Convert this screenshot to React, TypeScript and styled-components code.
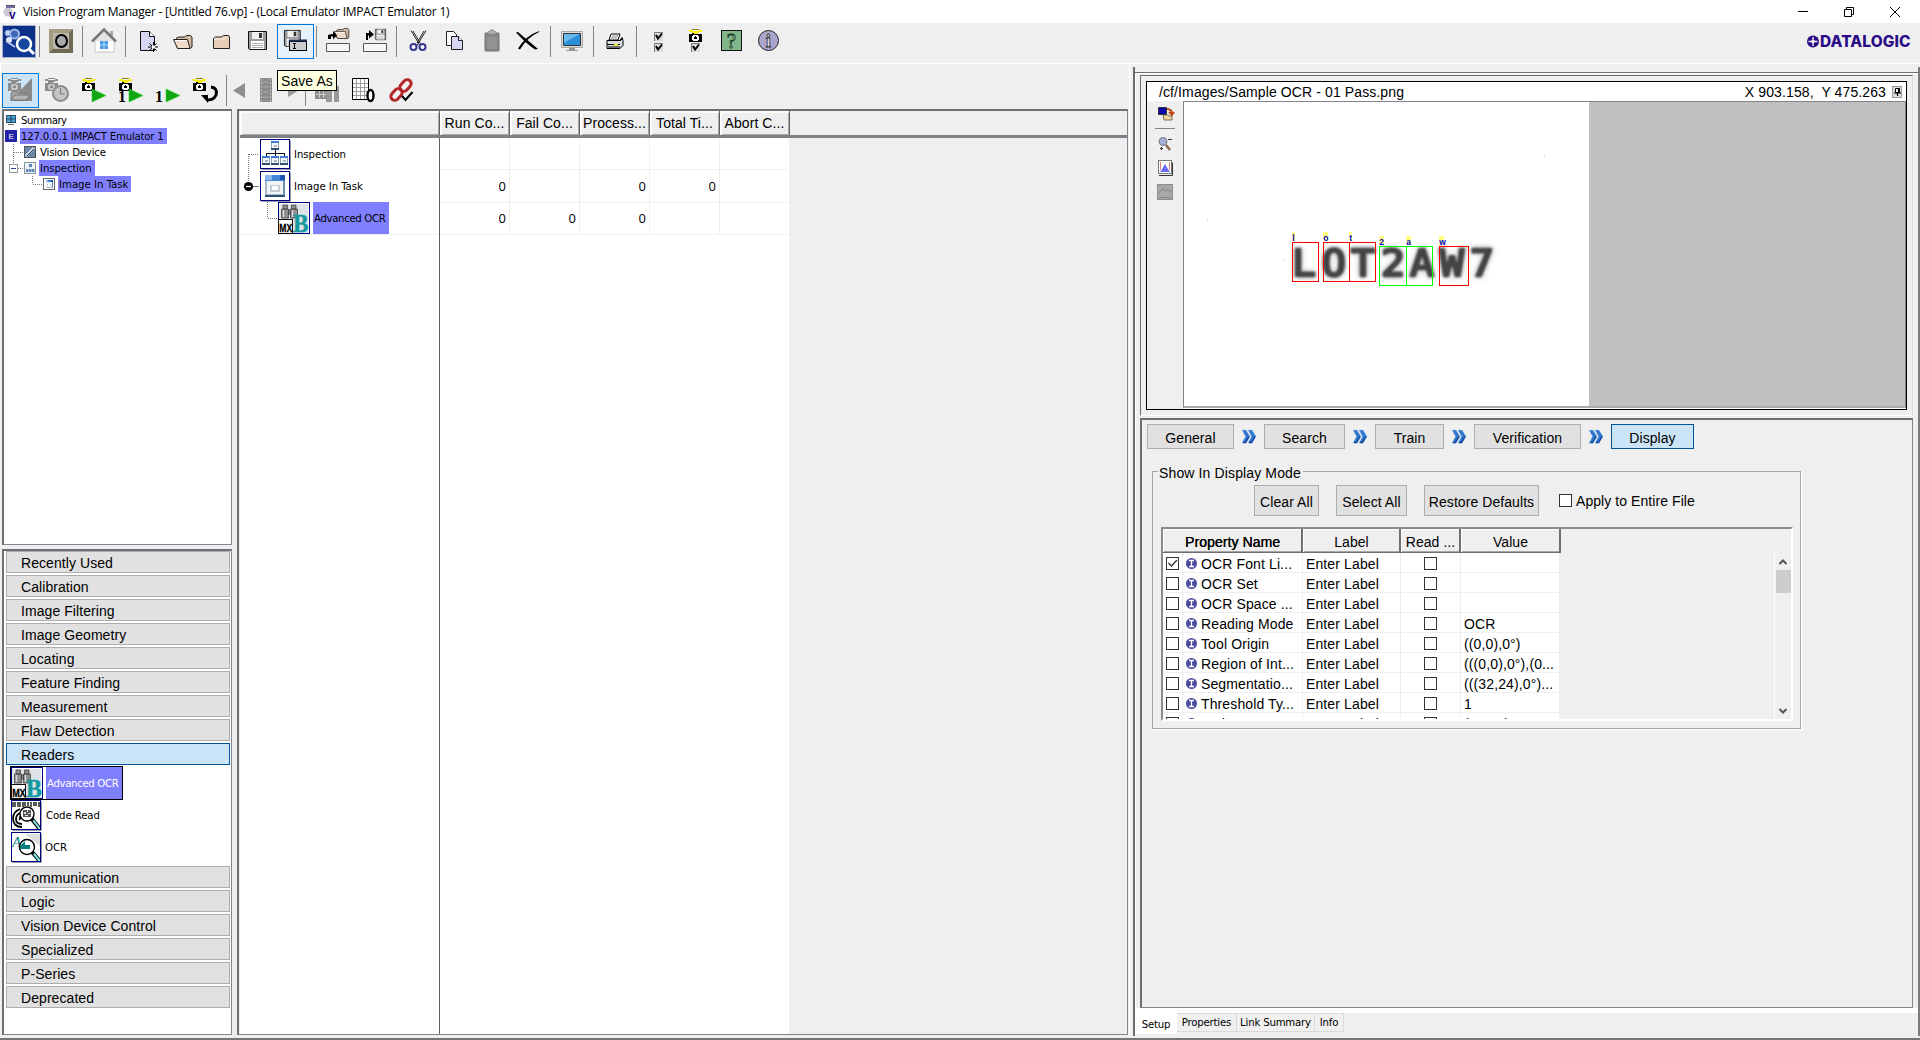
import React from "react";
import styled, { createGlobalStyle, css } from "styled-components";

const Global = createGlobalStyle`
  *{box-sizing:border-box}
  body{margin:0;background:#efefef;overflow:hidden}
  svg{display:block;flex:none;overflow:visible}
`;
const arial = css`font-family:"Liberation Sans",Arial,sans-serif;font-size:14px;letter-spacing:.07px;`;
const tahoma = css`font-family:"DejaVu Sans Condensed","DejaVu Sans",sans-serif;font-stretch:condensed;font-size:11.3px;letter-spacing:-0.2px;`;

const Root = styled.div`width:1920px;height:1040px;display:flex;flex-direction:column;background:#efefef;color:#000;${arial}white-space:nowrap;overflow:hidden;cursor:default;`;

/* ---------- title bar ---------- */
const TitleBar = styled.div`height:23px;background:#fff;display:flex;align-items:center;padding:0 19px 0 3px;`;
const Title = styled.div`font-family:"Open Sans","Noto Sans",sans-serif;font-size:12px;letter-spacing:-0.24px;flex:1;margin-left:6px;line-height:20px;`;
const WinButtons = styled.div`display:flex;gap:34px;align-items:center;height:20px;`;

/* ---------- toolbars ---------- */
const MainBar = styled.div`height:41px;border-bottom:1px solid #fff;display:flex;padding-top:1px;`;
const RunBar = styled.div`height:45px;display:flex;padding:9px 0 0 1px;border-left:1px solid #fff;position:relative;`;
const ToolButton = styled.div<{ $w?: number; $on?: "hover" | "down" }>`
  width:${p => p.$w ?? 37}px;height:35px;flex:none;position:relative;
  ${p => p.$on === "hover" && css`background:#e5f1fb;box-shadow:inset 0 0 0 1px #0078d7;`}
  ${p => p.$on === "down" && css`background:#cce4f7;box-shadow:inset 0 0 0 1px #0078d7;`}
`;
const Sep = styled.div`width:6px;height:31px;margin-top:2px;flex:none;background:linear-gradient(#858585,#858585) 2px 0/1px 100% no-repeat;`;
const Tooltip = styled.div`position:absolute;left:276px;top:6px;width:60px;height:21px;border:1px solid #000;background:#ffffe1;line-height:20px;padding-left:3px;z-index:3;`;
const Brand = styled.div`margin-left:auto;padding:8px 9px 0 0;`;

const Tool = ({ w = 37, on, children }: { w?: number; on?: "hover" | "down"; children?: React.ReactNode }) => (
  <ToolButton $w={w} $on={on}><svg width={w} height={35} viewBox={`0 0 ${w} 35`}>{children}</svg></ToolButton>
);

/* ---------- shared drawings ---------- */
const Camera = ({ x, y, gray }: { x: number; y: number; gray?: boolean }) => {
  const k = gray ? "#8c8c8c" : "#000";
  return (
    <g transform={`translate(${x} ${y})`} shapeRendering="crispEdges">
      <path d="M0 1h3v1h7v-1h3v2h-3v1h-2v1h-3v-1h-2v-1h-3z" fill={gray ? "#8c8c8c" : "#f5ee00"} />
      <path d="M3 0h7v1h-7z" fill={gray ? "#8c8c8c" : "#8a8400"} />
      <path d="M0 5h3v-1h2v1h8v8h-13z" fill={k} />
      <path d="M4 6h5v1h1v4h-1v1h-5v-1h-1v-4h1z" fill={gray ? "#c4c4c4" : "#fff"} />
      <path d="M6 7h1v1h1v2h-3v-2h1z" fill={gray ? "#8c8c8c" : "#000"} />
    </g>
  );
};
const Play = ({ x, y }: { x: number; y: number }) => <path d={`M${x} ${y}l14 6.5l-14 6.5z`} fill="#12a512" stroke="#2bd52b" strokeWidth=".6" />;
const Num = ({ x, y, size = 13, children }: { x: number; y: number; size?: number; children: string }) => (
  <text x={x} y={y} fontFamily="Liberation Serif,serif" fontWeight="bold" fontSize={size}>{children}</text>
);
const Floppy = ({ x, y, s = 1 }: { x: number; y: number; s?: number }) => (
  <g transform={`translate(${x} ${y}) scale(${s})`}>
    <path d="M.5.5h18v18h-17l-1-1z" fill="#9b9b9b" stroke="#111" />
    <path d="M4 1h11v7h-11z" fill="#f0f0f0" /><path d="M11 2h3v5h-3z" fill="#333" />
    <path d="M3 10h13v8h-13z" fill="#fff" /><path d="M4 12.5h11M4 14.5h11M4 16.5h11" stroke="#aaa" />
  </g>
);
const Folder = ({ x, y, s = 1 }: { x: number; y: number; s?: number }) => (
  <g transform={`translate(${x} ${y}) scale(${s})`}>
    <path d="M.5 13.500v-10l2-1.500h6l2-1.500h5l1 1.500v11.500z" fill="#e6cdb6" stroke="#222" />
    <path d="M1 4h10l2-2" fill="none" stroke="#fff6ea" />
  </g>
);
const OpenFolder = ({ x, y, s = 1 }: { x: number; y: number; s?: number }) => (
  <g transform={`translate(${x} ${y}) scale(${s})`}>
    <path d="M3.500 12v-9l2-1h6l2-1.500h4l1.500 1.500v10l-2 1.500z" fill="#d5b9a0" stroke="#222" />
    <path d="M.5 4.500h14l2.500 9h-12.500z" fill="#eddac8" stroke="#222" />
    <path d="M2 5.500h12" stroke="#fff" />
  </g>
);
const CheckSquare = ({ x, y }: { x: number; y: number }) => (
  <g transform={`translate(${x} ${y})`}>
    <path d="M0 0h9v9h-9z" fill="#dcdcdc" /><path d="M.5 9v-8.500h8.500" fill="none" stroke="#777" />
    <path d="M2 3l2 3.500l4-5" fill="none" stroke="#000" strokeWidth="2" />
  </g>
);
const Task = ({ s = 1 }: { s?: number }) => (
  <g transform={`scale(${s})`} shapeRendering="crispEdges">
    <path d="M0 0h20v22h-20z" fill="#a9bccf" /><path d="M0 0h20v6h-20z" fill="#4586d8" /><path d="M0 0h7v5h-7z" fill="#8bb8f0" />
    <path d="M15 0h5v5h-5z" fill="#1d52b0" /><path d="M2 6h16v13h-16z" fill="#f2f4f7" /><path d="M5 10h10v7h-10z" fill="#c4ccd6" /><path d="M7 11h6v4h-6z" fill="#fff" />
    <path d="M0 20h20v2h-20z" fill="#2f4f73" /><path d="M18 6h2v14h-2z" fill="#6f8fae" />
  </g>
);
const InspectionPic = () => (
  <g shapeRendering="crispEdges">
    {[[11, 2], [2, 17], [11, 17], [20, 17]].map(([x, y]) => (
      <g key={`${x}-${y}`} transform={`translate(${x} ${y})`}><path d="M0 0h8v9h-8z" fill="#8ea4bc" /><path d="M0 7h8v2h-8z" fill="#2f4f73" /><path d="M0 0h8v2h-8z" fill="#3d7dd4" /><path d="M1 2h6v5h-6z" fill="#f4f6f8" /><path d="M3 4h3v2h-3z" fill="#aab4c0" /></g>
    ))}
    <path d="M15 11h1v6h-1zM6 14h19v1h-19zM6 14h1v3h-1zM24 14h1v3h-1z" fill="#111" />
  </g>
);
const FrameIcon = ({ children }: { children?: React.ReactNode }) => (
  <svg width="31" height="31" viewBox="0 0 31 31"><path d="M1.500 30.500h29v-29" stroke="#9a9aa8" fill="none" /><rect x=".5" y=".5" width="29" height="29" fill="#fff" stroke="#000080" />{children}</svg>
);
const AdvancedIcon = () => (
  <svg width="32" height="32" viewBox="0 0 32 32">
    <rect x=".5" y=".5" width="31" height="31" fill="#dde3e6" stroke="#000080" />
    <path d="M1.500 1.500h29v29" stroke="#fff" fill="none" />
    <g fill="#8d8d8d" stroke="#444" strokeWidth=".8"><path d="M5 3h4.500v4h-4.500zM13.500 3h4.500v4h-4.500zM3.500 7h7v9h-7zM12.500 7h7v9h-7zM10.500 8h2v4h-2z" /></g>
    <path d="M5.500 8v7M14.500 8v7" stroke="#d5d5d5" strokeWidth="1.500" />
    <text x="15" y="29.500" fontFamily="Liberation Serif,serif" fontWeight="bold" fontSize="26" textLength="15.500" lengthAdjust="spacingAndGlyphs" fill="#149a9e" stroke="#149a9e" strokeWidth=".5">B</text>
    <rect x=".5" y="17.500" width="14" height="14" fill="#fff" stroke="#111" />
    <text x="1.300" y="30" fontFamily="Liberation Sans,sans-serif" fontWeight="bold" fontSize="11" textLength="13" lengthAdjust="spacingAndGlyphs" stroke="#000" strokeWidth=".3">MX</text>
  </svg>
);
const Glass = ({ cx, cy, r }: { cx: number; cy: number; r: number }) => (
  <g><circle cx={cx} cy={cy} r={r} fill="#fff" stroke="#000" strokeWidth="1.400" /><path d={`M${cx + r * .7} ${cy + r * .7}L28 28`} stroke="#000" strokeWidth="4" /><path d={`M${cx + r * .9} ${cy + r * .9}L28.500 28.500`} stroke="#7fe8ee" strokeWidth="2" /></g>
);

/* ---------- workspace ---------- */
const Workspace = styled.div`flex:1;display:flex;min-height:0;border-bottom:2px solid #757575;`;
const LeftSide = styled.div`width:1130px;flex:none;display:flex;flex-direction:column;border-right:1px solid #fff;`;
const Panels = styled.div`height:926px;display:flex;gap:5px;padding-left:2px;`;
const Nav = styled.div`width:230px;display:flex;flex-direction:column;gap:4px;`;
const sunk = css`border:1px solid #83868c;border-left:2px solid #6d7075;border-top:2px solid #6d7075;`;
const Tree = styled.div`${sunk}height:436px;background:#fff;padding-top:1px;`;
const TreeRow = styled.div`height:16px;display:flex;align-items:center;`;
const TreeLabel = styled.span<{ $sel?: boolean; $ls?: number }>`${tahoma}letter-spacing:${p => p.$ls ?? -0.1}px;line-height:17px;height:16px;padding:0 3px 0 1px;margin-left:3px;${p => p.$sel && "background:#8080ff;"}`;

const Categories = styled.div`${sunk}flex:1;background:#fff;padding:0 1px 0 2px;display:flex;flex-direction:column;gap:2px;`;
const Category = styled.div<{ $on?: boolean }>`height:22px;flex:none;border:1px solid ${p => (p.$on ? "#005499" : "#adadad")};background:${p => (p.$on ? "#cce4f7" : "#e1e1e1")};padding-left:14px;line-height:22px;`;
const Tools = styled.div`height:98px;flex:none;margin:-1px 0 0;display:flex;flex-direction:column;background:repeating-linear-gradient(#999 0 1px,#fff 1px 2px) -1px 0/1px 84px no-repeat;`;
const ToolItem = styled.div<{ $on?: boolean }>`height:33px;display:flex;align-items:center;margin-left:4px;${tahoma}letter-spacing:-0.1px;
  ${p => p.$on && css`height:34px;margin-bottom:-1px;width:113px;border:1px solid #000;background:linear-gradient(90deg,#fff 35px,#8080ff 35px);color:#fff;letter-spacing:-.35px;`}`;
const ToolName = styled.span<{ $gap: number }>`margin-left:${p => p.$gap}px;`;

const Grid = styled.div`${sunk}width:891px;display:flex;flex-direction:column;padding-left:1px;`;
const GridHead = styled.div`height:27px;display:flex;border-bottom:3px solid #7d8187;`;
const HeadCell = styled.div<{ $w: number }>`width:${p => p.$w}px;height:24px;flex:none;border-right:1px solid #5f6164;box-shadow:inset 1px 1px 0 #fff,inset 2px 2px 0 #fbfbfb,inset -1px -1px 0 #a8a8a8;text-align:center;line-height:25px;`;
const GridBody = styled.div`flex:1;display:flex;`;
const Names = styled.div`width:200px;background:#fff;border-right:1px solid #5f6164;`;
const NameRow = styled.div<{ $last?: boolean }>`height:${p => (p.$last ? 33 : 32)}px;display:flex;align-items:center;${p => p.$last && "border-bottom:1px solid #efefef;"}`;
const NameLabel = styled.span<{ $sel?: boolean }>`${tahoma}letter-spacing:${p => (p.$sel ? -0.35 : -0.05)}px;height:32px;line-height:33px;margin-left:${p => (p.$sel ? 3 : 2)}px;padding:0 ${p => (p.$sel ? 4 : 0)}px 0 1px;${p => p.$sel && "background:#8080ff;"}`;
const Counts = styled.div`width:350px;background:#fff;border-right:1px solid #efefef;`;
const CountRow = styled.div`height:32px;display:grid;grid-template-columns:repeat(5,70px);`;
const Count = styled.div`border-right:1px solid #efefef;border-bottom:1px solid #efefef;text-align:right;padding-right:3px;line-height:32px;font-family:"Open Sans","Noto Sans",sans-serif;font-size:13px;`;

/* ---------- right side ---------- */
const RightSide = styled.div`flex:1;padding:3px 0 0 3px;display:flex;`;
const RightOuter = styled.div`flex:1;border-left:2px solid #6b6b6b;margin-bottom:2px;padding-top:5px;display:flex;border-right:2px solid #7b7b7b;`;
const RightFrame = styled.div`flex:1;border-top:1px solid #6b6b6b;display:flex;flex-direction:column;box-shadow:inset 1px 1px 0 #fff;`;
const Raised = styled.div`margin:2px 5px 0;height:341px;border:1px solid #6b6b6b;border-bottom-color:#fff;border-right-color:#dcdcdc;padding:5px;`;
const Viewer = styled.div`height:329px;border:1px solid #000;display:flex;flex-direction:column;background:#fff;`;
const ViewerHead = styled.div`height:19px;display:flex;align-items:center;padding:1px 4px 0 12px;letter-spacing:.11px;`;
const PathText = styled.span`flex:1;`;
const Pin = styled.span`margin-left:6px;`;
const ViewerBody = styled.div`flex:1;display:flex;`;
const Strip = styled.div`width:36px;background:#efefef;display:flex;flex-direction:column;align-items:center;padding-top:5px;`;
const Canvas = styled.div`flex:1;border:1px solid #83838d;border-bottom:2px solid #a9a9ae;margin-bottom:1px;background:#c0c0c0;`;
const Photo = styled.div`width:405px;height:100%;background:#fff;`;

const Setup = styled.div`height:590px;margin:2px 5px 0;border:1px solid #83868c;border-left:2px solid #6d7075;border-top:2px solid #6d7075;padding:4px 0 0 5px;background:#efefef;`;
const Steps = styled.div`display:flex;align-items:center;height:25px;`;
const Step = styled.div<{ $w: number; $on?: boolean }>`width:${p => p.$w}px;height:25px;border:1px solid ${p => (p.$on ? "#005499" : "#adadad")};background:${p => (p.$on ? "#cce4f7" : "#e1e1e1")};text-align:center;line-height:26px;`;
const Arrow = styled.div`width:30px;display:flex;justify-content:center;`;
const Group = styled.fieldset`margin:14px 0 0 5px;padding:0;border:1px solid #a5a5a5;box-shadow:1px 1px 0 #fff;width:649px;height:266px;min-width:0;`;
const Legend = styled.legend`margin-left:5px;padding:0 2px 0 1px;height:17px;line-height:21px;letter-spacing:.13px;`;
const Actions = styled.div`display:flex;align-items:center;margin:5px 0 0 101px;height:31px;`;
const Action = styled.div<{ $w: number }>`width:${p => p.$w}px;height:31px;margin-right:17px;border:1px solid #adadad;background:#e1e1e1;text-align:center;line-height:32px;`;
const Check = styled.span<{ $ml?: number }>`display:inline-flex;width:13px;height:13px;flex:none;border:1px solid #333;background:#fff;margin-left:${p => p.$ml ?? 0}px;`;
const ApplyText = styled.span`margin:1px 0 0 4px;`;
const Table = styled.div`margin:11px 0 0 8px;width:632px;height:194px;border:2px solid;border-color:#8b8b8b #fff #fff #8b8b8b;display:flex;flex-direction:column;overflow:hidden;`;
const TableHead = styled.div`display:flex;height:24px;`;
const THead = styled.div<{ $w: number; $bold?: boolean }>`width:${p => p.$w}px;height:24px;flex:none;border-right:2px solid #6f6f6f;border-bottom:1px solid #6f6f6f;box-shadow:inset 1px 1px 0 #fff,inset 0 -1px 0 #a5a5a5;text-align:center;line-height:26px;padding-left:1px;${p => p.$bold && "text-shadow:.35px 0 0 #000;"}`;
const TableBody = styled.div`display:flex;height:166px;`;
const Rows = styled.div`width:397px;overflow:hidden;`;
const Row = styled.div`display:grid;grid-template-columns:20px 120px 98px 60px 99px;height:20px;background:#fff;`;
const Cell = styled.div<{ $center?: boolean }>`border-right:1px solid #efefef;border-bottom:1px solid #efefef;height:20px;display:flex;align-items:center;padding-left:3px;overflow:hidden;padding-top:2px;letter-spacing:.12px;${p => p.$center && "justify-content:center;padding-left:0;"}`;
const InputMark = styled.svg`margin-right:3px;`;
const Scroll = styled.div`margin-left:auto;width:17px;border-left:1px solid #fff;display:flex;flex-direction:column;align-items:center;`;
const Thumb = styled.div`width:15px;height:23px;background:#cdcdcd;`;
const ScrollBtn = styled.div<{ $end?: boolean }>`height:17px;display:flex;align-items:center;${p => p.$end && "margin-top:auto;"}`;

const Tabs = styled.div`display:flex;height:26px;background:linear-gradient(#fff 5px,#efefef 5px);align-items:flex-start;`;
const Tab = styled.div<{ $w: number; $on?: boolean }>`${tahoma}width:${p => p.$w}px;text-align:center;
  ${p => p.$on ? "height:26px;background:#fff;line-height:33px;" : "height:19px;margin-top:5px;border:1px solid #d9d9d9;border-left:0;line-height:17px;background:#f0f0f0;"}`;

const props: [string, string][] = [
  ["OCR Font Li...", ""], ["OCR Set", ""], ["OCR Space ...", ""], ["Reading Mode", "OCR"], ["Tool Origin", "((0,0),0°)"],
  ["Region of Int...", "(((0,0),0°),(0..."], ["Segmentatio...", "(((32,24),0°)..."], ["Threshold Ty...", "1"], ["Train Score", "(0,999)"],
];
const before = ["Recently Used", "Calibration", "Image Filtering", "Image Geometry", "Locating", "Feature Finding", "Measurement", "Flaw Detection"];
const after = ["Communication", "Logic", "Vision Device Control", "Specialized", "P-Series", "Deprecated"];
const glyphs: [string, number][] = [["L", 1293], ["O", 1323], ["T", 1352], ["2", 1382], ["A", 1411], ["W", 1441], ["7", 1471]];
const regions: [string, number, number, number, string][] = [
  ["l", 1292, 242, 26, "#f00"], ["o", 1323, 242, 26, "#f00"], ["t", 1349, 242, 26, "#f00"],
  ["2", 1379, 246, 27, "#0f0"], ["a", 1406, 246, 26, "#0f0"], ["w", 1439, 246, 29, "#f00"],
];
const dots = { stroke: "#777", strokeDasharray: "1 1", fill: "none" } as const;

const Chevrons = () => (
  <svg width="14" height="13" viewBox="0 0 14 13">
    <path d="M0 0h4l4 6.500l-4 6.500h-4l3.500-6.500zM6 0h4l4 6.500l-4 6.500h-4l3.500-6.500z" fill="#2f76cf" stroke="#9fc0ea" strokeWidth=".5" />
    <path d="M1 12.500h2.500l3.500-6M7 12.500h2.500l3.500-6" stroke="#164a9c" strokeWidth="1.400" fill="none" />
  </svg>
);

const MainToolbar = () => (
  <MainBar>
    <Tool>
      <rect x="2.500" y="1.500" width="33" height="32" fill="#0b2f86" stroke="#aab3c8" />
      <path d="M3 20q15-8 32-4v17h-32z" fill="#123f9f" opacity=".6" />
      <circle cx="8" cy="9" r="3" fill="#c5d4f2" stroke="#6f8fce" /><circle cx="14.500" cy="10" r="4.500" fill="#3f69b8" stroke="#9db9ea" strokeWidth="2" />
      <circle cx="9" cy="16" r="3" fill="#dfe8fa" /><path d="M6 17l9 6" stroke="#b7c8ec" strokeWidth="2" />
      <circle cx="24" cy="20" r="7" fill="#16479f" stroke="#fff" strokeWidth="2.500" /><path d="M29 25l5 5" stroke="#fff" strokeWidth="3" />
    </Tool>
    <Sep />
    <Tool>
      <path d="M6 5h24v24h-24z" fill="#6f6a55" /><path d="M6 5h24l-4 4h-16v16l-4 4z" fill="#a59d80" /><path d="M10 9h16v16h-16z" fill="#b8b5ab" />
      <ellipse cx="18.500" cy="17" rx="5.500" ry="6" fill="#aaa" stroke="#000" strokeWidth="2" />
    </Tool>
    <Sep />
    <Tool>
      <path d="M9 16h19v12h-19z" fill="#fff" stroke="#c5c5c5" /><path d="M24 7h3v7h-3z" fill="#aaa" />
      <path d="M8 17l10-10l10 10z" fill="#e4e4e4" /><path d="M6 17.500l12-12l12 12" fill="none" stroke="#777" strokeWidth="2.500" />
      <path d="M14 17h8v8h-8z" fill="#4a98e6" /><path d="M18 17v8M14 21h8" stroke="#b9dcfb" />
    </Tool>
    <Sep />
    <Tool>
      <path d="M11.500 7.500h9l5 5v14h-14z" fill="#d6d6f2" stroke="#111" /><path d="M20.500 7.500v5h5" fill="#fff" stroke="#111" />
      <path d="M24.500 18v10M19 23h10M20.500 19.500l7 7M27.500 19.500l-7 7" stroke="#000" /><rect x="23" y="21.500" width="3" height="3" fill="#fff" />
    </Tool>
    <Tool><OpenFolder x={7} y={11} /></Tool>
    <Tool><Folder x={10} y={11} /></Tool>
    <Tool><Floppy x={8} y={7} /></Tool>
    <Tool on="hover">
      <Floppy x={7} y={6} s={.88} />
      <rect x="12.500" y="17.500" width="17" height="9" fill="#ccc" stroke="#000" /><path d="M12 16.500h18" stroke="#1c2f55" strokeWidth="2" />
      <path d="M16 19.500h3M16 24.500h3M17.500 19.500v5" stroke="#000" />
    </Tool>
    <Sep />
    <Tool>
      <path d="M6.500 19.500h23v8h-23z" fill="#f6f6f6" stroke="#555" /><OpenFolder x={14} y={4} s={.78} />
      <path d="M8 15v-4q3-1 5-1v-3l4 4.500l-4 4v-3h-2v2.500z" fill="#000" />
    </Tool>
    <Tool>
      <path d="M6.500 19.500h23v8h-23z" fill="#f6f6f6" stroke="#555" /><Floppy x={18} y={5} s={.58} />
      <path d="M9 16v-7h3v-3l5 4.500l-5 4v-3h-1v4.500z" fill="#000" />
    </Tool>
    <Sep />
    <Tool>
      <path d="M11 6.500l9 15M26 6.500l-9 15M13 7l7 12M24 7l-7 12" stroke="#222" fill="none" />
      <circle cx="13.500" cy="23" r="3" fill="#fff" stroke="#35358e" strokeWidth="2" /><circle cx="22.500" cy="23" r="3" fill="#fff" stroke="#35358e" strokeWidth="2" />
    </Tool>
    <Tool>
      <path d="M9.500 7.500h7l3 3v11h-10z" fill="#fff" stroke="#222" />
      <path d="M14.500 12.500h7l4 4v9h-11z" fill="#d6d6f2" stroke="#222" /><path d="M21.500 12.500v4h4" fill="#fff" stroke="#222" />
    </Tool>
    <Tool><path d="M11 9h14v18h-14z" fill="#858585" stroke="#777" /><path d="M13 10q1-3 3-3q2-3 4 0q2 0 3 3z" fill="#b5b5b5" stroke="#888" /><path d="M13 13h10v12h-10z" fill="#929292" /></Tool>
    <Tool><path d="M7 8l20 17l-3 .5q-9-6-19-17zM29 7.500q-13 6-20 18l-2-1q8-13 20-17z" fill="#000" /></Tool>
    <Sep />
    <Tool>
      <path d="M7.500 7.500h21v16h-21z" fill="#dcdcdc" stroke="#aaa" /><path d="M9.500 9.500h17v12h-17z" fill="#2a8fd8" stroke="#333" /><path d="M10 10h16l-16 9z" fill="#67b9ef" />
      <path d="M15 24h6v2h3v1h-12v-1h3z" fill="#999" />
    </Tool>
    <Sep />
    <Tool>
      <path d="M14 10h9l-2 6h-9z" fill="#fff" stroke="#000" /><path d="M15 12h6M14 14h6" stroke="#888" />
      <path d="M10 16.500h13l2-3l1 3v5l-3 3h-13z" fill="#d8d8d8" stroke="#000" /><path d="M10 20.500h13M11 23h12M23 17l3-3" stroke="#000" /><path d="M17 20h4v1.500h-4z" fill="#f3e600" />
    </Tool>
    <Sep />
    <Tool><CheckSquare x={14} y={8} /><CheckSquare x={14} y={19} /></Tool>
    <Tool><Camera x={12} y={5} /><CheckSquare x={14} y={19} /></Tool>
    <Tool>
      <rect x="7.500" y="6.500" width="20" height="20" fill="#83b58b" stroke="#111" />
      <text x="17.500" y="24" textAnchor="middle" fontFamily="Liberation Serif,serif" fontSize="21" fill="#a9d3ae" stroke="#14351b" strokeWidth=".8">?</text>
    </Tool>
    <Tool>
      <circle cx="17.500" cy="16.500" r="10" fill="#a9a5cc" stroke="#222" />
      <text x="17.500" y="23" textAnchor="middle" fontFamily="Liberation Serif,serif" fontWeight="bold" fontSize="19" fill="#d7d5ee" stroke="#333" strokeWidth=".8">i</text>
    </Tool>
    <Brand>
      <svg width="104" height="20" viewBox="0 0 104 20">
        <circle cx="6" cy="9.500" r="6" fill="#2a0c87" /><path d="M6 5v9M1.500 9.500h9" stroke="#efefef" strokeWidth="1.400" /><circle cx="6" cy="9.500" r="1.800" fill="#efefef" />
        <text x="13" y="15" fontFamily="Inter,Lato,sans-serif" fontWeight="800" fontSize="15.500" textLength="90.500" lengthAdjust="spacingAndGlyphs" fill="#2a0c87">DATALOGIC</text>
      </svg>
    </Brand>
  </MainBar>
);

const RunToolbar = () => (
  <RunBar>
    <Tool on="down">
      <path d="M8 28l22-23v23z" fill="#8a8a8a" /><Camera x={6} y={5} gray />
      <path d="M9 27v-7l2-2h4l1 2h8v7z" fill="#a5a5a5" stroke="#777" /><path d="M9 27l4-5h15l-4 5z" fill="#b5b5b5" stroke="#777" />
    </Tool>
    <Tool><Camera x={6} y={5} gray /><circle cx="21.500" cy="20.500" r="7.500" fill="#c6c6c6" stroke="#8c8c8c" strokeWidth="2" /><path d="M21.500 15v6h4" stroke="#777" fill="none" /></Tool>
    <Tool><Camera x={6} y={5} /><Play x={16} y={16} /></Tool>
    <Tool><Camera x={6} y={5} /><Num x={5} y={29} size={16}>1</Num><Play x={16} y={16} /></Tool>
    <Tool><Num x={5} y={29} size={16}>1</Num><Play x={16} y={16} /></Tool>
    <Tool>
      <Camera x={6} y={5} /><path d="M24 14q7 1 5 8q-2 5-8 5" fill="none" stroke="#000" strokeWidth="3" /><path d="M14 22h7v8z" fill="#000" />
    </Tool>
    <Sep />
    <Tool w={19}><path d="M15 10v15l-12-7.500z" fill="#8e8e8e" /></Tool>
    <Tool w={34}><path d="M11 5h12v24h-12z" fill="#8c8c8c" /><path d="M12.500 6v23M21.500 6v23" stroke="#c8c8c8" strokeDasharray="1.500 2" /><path d="M14 9h6M14 14h6M14 19h6M14 24h6" stroke="#aaa" /></Tool>
    <Tool w={20}><path d="M5 9v15l12-7.500z" fill="#9a9a9a" /></Tool>
    <Sep />
    <Tool>
      <path d="M6 6h17v20h-17z" fill="#8c8c8c" /><path d="M7 9.500h14M7 13.500h14M7 17.500h14M7 21.500h14M10.500 7v18M14.500 7v18M18.500 7v18" stroke="#cfcfcf" />
      <path d="M17 13h6v16h-6zM25 13h5v16h-5z" fill="#999" />
    </Tool>
    <Tool>
      <path d="M6.500 5.500h16v21h-16z" fill="#fff" stroke="#000" /><path d="M7 10.500h15M7 14.500h15M7 18.500h15M7 22.500h15M10.500 6v20M14.500 6v20M18.500 6v20" stroke="#888" strokeWidth=".8" />
      <ellipse cx="24.500" cy="22.500" rx="3" ry="5.500" fill="#fff" stroke="#000" strokeWidth="2.400" />
    </Tool>
    <Tool>
      <g fill="none" stroke="#b3262a" strokeWidth="3"><rect x="-6.500" y="-4" width="13" height="8" rx="4" transform="translate(22.500 12.500) rotate(-48)" /><rect x="-6.500" y="-4" width="13" height="8" rx="4" transform="translate(13.500 21.500) rotate(-48)" /></g>
      <path d="M19 24l3.500 4l7-8" fill="none" stroke="#efefef" strokeWidth="4" /><path d="M19 23l3.500 4l7-8" fill="none" stroke="#000" strokeWidth="2" />
    </Tool>
    <Tooltip>Save As</Tooltip>
  </RunBar>
);

const Navigation = () => (
  <Nav>
    <Tree>
      <TreeRow>
        <svg width="13" height="16" viewBox="4 0 13 16"><path d="M6 3h10v8h-10z" fill="#2b4a63" /><path d="M7 4h8v2.500h-8zM7 7.500h8v2.500h-8z" fill="#4aa7dc" /><path d="M11 3v8" stroke="#16344c" /><path d="M8 12h6v1h-6z" fill="#777" /></svg>
        <TreeLabel $ls={-0.5}>Summary</TreeLabel>
      </TreeRow>
      <TreeRow>
        <svg width="13" height="16" viewBox="4 0 13 16"><path d="M5 2h12v12h-12z" fill="#2323a8" /><text x="8.500" y="11" fontFamily="Liberation Sans" fontSize="8" fill="#fff">E</text></svg>
        <TreeLabel $sel $ls={-0.2}>127.0.0.1 IMPACT Emulator 1</TreeLabel>
      </TreeRow>
      <TreeRow>
        <svg width="32" height="16" viewBox="4 0 32 16"><path d="M13.500 0v16M14 8.500h9" {...dots} /><rect x="24.500" y="2.500" width="11" height="11" fill="#6b87a8" stroke="#555" /><path d="M26 12l8-8" stroke="#cfe0f5" strokeWidth="2.500" /><path d="M27 12l7-7" stroke="#234" /></svg>
        <TreeLabel $ls={-0.2}>Vision Device</TreeLabel>
      </TreeRow>
      <TreeRow>
        <svg width="32" height="16" viewBox="4 0 32 16"><path d="M13.500 0v4M18 8.500h6" {...dots} /><rect x="9.500" y="4.500" width="8" height="8" fill="#fff" stroke="#999" /><path d="M11 8.500h5" stroke="#3549a0" /><rect x="24.500" y="2.500" width="11" height="11" fill="#eef3f8" stroke="#8794a2" /><path d="M29 4h3v3h-3zM26 9h2.500v3h-2.500zM29 9h2.500v3h-2.500zM32 9h2.500v3h-2.500z" fill="#5b87bd" /></svg>
        <TreeLabel $sel>Inspection</TreeLabel>
      </TreeRow>
      <TreeRow>
        <svg width="51" height="16" viewBox="4 0 51 16"><path d="M32.500 0v8M33 8.500h9" {...dots} /><rect x="43.500" y="2.500" width="11" height="11" fill="#fff" stroke="#666" /><g transform="translate(45.500 4)"><Task s={.38} /></g></svg>
        <TreeLabel $sel $ls={0}>Image In Task</TreeLabel>
      </TreeRow>
    </Tree>
    <Categories>
      {before.map(t => <Category key={t}>{t}</Category>)}
      <Category $on>Readers</Category>
      <Tools>
        <ToolItem $on><AdvancedIcon /><ToolName $gap={4}>Advanced OCR</ToolName></ToolItem>
        <ToolItem>
          <svg width="1" height="31" /><FrameIcon>
            <path d="M2 2v5M4 2v5M7 2v5M9 2v5M12 2v5M14 2v4M17 2v4M20 2v5M23 2v4M25 2v4M28 2v5" stroke="#000" strokeWidth="1.300" />
            <path d="M9 9q-7 3-7 9q0 9 9 9M9 13q-4 2-4 6q0 5 6 5M10 16q-2 2-1 4" fill="none" stroke="#000" strokeWidth="1.800" />
            <Glass cx={16} cy={14} r={7} /><path d="M12 10h8v7h-8z" fill="#555" /><path d="M13 12h2v2h-2zM17 13h2v1h-2zM14 15h3v1h-3zM16 10h1v2h-1z" fill="#ddd" />
          </FrameIcon><ToolName $gap={4}>Code Read</ToolName>
        </ToolItem>
        <ToolItem>
          <svg width="1" height="31" /><FrameIcon>
            <path d="M14 2h15v12z" fill="#ddd" /><text x="1" y="15" fontFamily="Liberation Serif" fontStyle="italic" fontSize="15" fill="#008080">A</text>
            <Glass cx={16} cy={15} r={7.500} /><path d="M9 14l5-5v4h5v4h-10z" fill="#008080" />
          </FrameIcon><ToolName $gap={3}>OCR</ToolName>
        </ToolItem>
      </Tools>
      {after.map(t => <Category key={t}>{t}</Category>)}
    </Categories>
  </Nav>
);

const counts = [["", "", "", "", ""], ["0", "", "0", "0", ""], ["0", "0", "0", "", ""]];
const Program = () => (
  <Grid>
    <GridHead>
      <HeadCell $w={200} />
      {["Run Co...", "Fail Co...", "Process...", "Total Ti...", "Abort C..."].map(t => <HeadCell $w={70} key={t}>{t}</HeadCell>)}
    </GridHead>
    <GridBody>
      <Names>
        <NameRow>
          <svg width="20" height="32" viewBox="240 138 20 32"><path d="M248.500 154v16M249 154.500h10" {...dots} /></svg>
          <FrameIcon><InspectionPic /></FrameIcon><NameLabel>Inspection</NameLabel>
        </NameRow>
        <NameRow>
          <svg width="20" height="32" viewBox="240 170 20 32"><path d="M248.500 170v12" {...dots} /><path d="M252 186.500h7" stroke="#777" /><circle cx="248.500" cy="186.500" r="4.600" /><path d="M246 186.500h5" stroke="#fff" strokeWidth="1.300" /></svg>
          <FrameIcon><g transform="translate(5 4)"><Task /></g></FrameIcon><NameLabel>Image In Task</NameLabel>
        </NameRow>
        <NameRow $last>
          <svg width="38" height="32" viewBox="240 202 38 32"><path d="M267.500 202v16M268 218.500h10" {...dots} /></svg>
          <AdvancedIcon /><NameLabel $sel>Advanced OCR</NameLabel>
        </NameRow>
      </Names>
      <Counts>
        {counts.map((r, i) => <CountRow key={i}>{r.map((c, j) => <Count key={j}>{c}</Count>)}</CountRow>)}
      </Counts>
    </GridBody>
  </Grid>
);

const ImageView = () => (
  <Raised>
    <Viewer>
      <ViewerHead>
        <PathText>/cf/Images/Sample OCR - 01 Pass.png</PathText>X 903.158,&nbsp; Y 475.263
        <Pin><svg width="10" height="12" viewBox="0 0 10 12"><rect x=".5" y=".5" width="9" height="11" fill="#ddd" stroke="#999" /><path d="M3.500 2.500h4v4h-4z" fill="#fff" stroke="#000" /><path d="M6.500 2v5M2 7h7M5.500 7v3" stroke="#000" strokeWidth="1.200" /></svg></Pin>
      </ViewerHead>
      <ViewerBody>
        <Strip>
          <svg width="18" height="100" viewBox="1156 106 18 100">
            <path d="M1158.500 107.500h8v7h-8z" fill="#0a0ab0" stroke="#333" /><path d="M1167 109q5 0 5 5M1169 112l3 3l2-3" fill="none" stroke="#c34a18" strokeWidth="2" /><path d="M1163 115h5l1 1h3v4h-8z" fill="#f4d79a" stroke="#555" strokeWidth=".8" />
            <path d="M1155 128.500h20" stroke="#858585" />
            <circle cx="1163" cy="141.500" r="4" fill="#aab0dc" stroke="#777" /><path d="M1166 145l4 5" stroke="#8a6a50" strokeWidth="2.500" /><path d="M1168 139.500h4M1160 148.500h3M1161.500 147v3" stroke="#333" />
            <path d="M1159 175.500h13.500v-13" stroke="#333" fill="none" /><rect x="1158.500" y="160.500" width="13" height="13" fill="#fff" stroke="#777" /><path d="M1160 172l1.500-2l3.500-6l3.500 6l1.500 2z" fill="#6a6af0" /><path d="M1160.500 162v8M1169.500 162v8" stroke="#e08080" />
            <rect x="1157.500" y="184.500" width="15" height="15" fill="#a8a8a8" stroke="#8e8e8e" /><path d="M1159 193l4-5l2 3l3-1l4 2M1159 197.500h12" stroke="#858585" fill="none" />
          </svg>
        </Strip>
        <Canvas>
          <Photo>
            <svg width="405" height="303" viewBox="1184 102 405 303">
              <defs>
                <filter id="ink" x="-30%" y="-30%" width="160%" height="160%">
                  <feGaussianBlur in="SourceGraphic" stdDeviation="3" result="wide" />
                  <feComponentTransfer in="wide" result="haze"><feFuncA type="linear" slope=".35" /></feComponentTransfer>
                  <feGaussianBlur in="SourceGraphic" stdDeviation=".9" result="soft" />
                  <feMerge><feMergeNode in="haze" /><feMergeNode in="soft" /></feMerge>
                </filter>
              </defs>
              <g fontFamily="DejaVu Sans Mono,monospace" fontSize="38" fill="#444" stroke="#444" strokeWidth="2.600" strokeLinejoin="round" filter="url(#ink)">
                {glyphs.map(([c, x]) => <text key={c} x={x - 1} y="275.500" textLength="24" lengthAdjust="spacingAndGlyphs">{c}</text>)}
              </g>
              {regions.map(([c, x, y, w, col]) => (
                <g key={x}>
                  <rect x={x} y={y - 10} width={c === "l" || c === "t" ? 3 : 5} height="9" fill="#ffff80" />
                  <text x={x + .3} y={y - 1.500} fontFamily="Liberation Sans,sans-serif" fontWeight="bold" fontSize="8.500" fill="#0000d0">{c}</text>
                  <rect x={x + .5} y={y + .5} width={w} height="39" fill="none" stroke={col} />
                </g>
              ))}
              <path d="M1207 219h1v1h-1zM1284 260h1v1h-1zM1544 155h1v1h-1z" fill="#bbb" />
            </svg>
          </Photo>
        </Canvas>
      </ViewerBody>
    </Viewer>
  </Raised>
);

const steps: [string, number][] = [["General", 87], ["Search", 81], ["Train", 69], ["Verification", 107], ["Display", 83]];
const SetupPanel = () => (
  <Setup>
    <Steps>
      {steps.map(([t, w], i) => (
        <React.Fragment key={t}>{i > 0 && <Arrow><Chevrons /></Arrow>}<Step $w={w} $on={i === 4}>{t}</Step></React.Fragment>
      ))}
    </Steps>
    <Group>
      <Legend>Show In Display Mode</Legend>
      <Actions>
        <Action $w={65}>Clear All</Action><Action $w={71}>Select All</Action><Action $w={115}>Restore Defaults</Action>
        <Check $ml={3} /><ApplyText>Apply to Entire File</ApplyText>
      </Actions>
      <Table>
        <TableHead><THead $w={140} $bold>Property Name</THead><THead $w={98}>Label</THead><THead $w={60}>Read ...</THead><THead $w={100}>Value</THead></TableHead>
        <TableBody>
          <Rows>
            {props.map(([n, v], i) => (
              <Row key={n}>
                <Cell><Check>{i === 0 && <svg width="11" height="11" viewBox="0 0 11 11"><path d="M1.500 5l3 3l5.500-6" fill="none" stroke="#333" strokeWidth="1.300" /></svg>}</Check></Cell>
                <Cell>
                  <InputMark width="12" height="12" viewBox="0 0 12 12"><circle cx="5.500" cy="5.500" r="5.500" fill="#4a4aa0" /><path d="M3 2.500h5M3 8.500h5M5.500 2.500v6" stroke="#fff" strokeWidth="1.300" /></InputMark>{n}
                </Cell>
                <Cell>Enter Label</Cell><Cell $center><Check /></Cell><Cell>{v}</Cell>
              </Row>
            ))}
          </Rows>
          <Scroll>
            <ScrollBtn><svg width="8" height="6" viewBox="0 0 8 6"><path d="M.5 5l3.500-3.500l3.500 3.500" fill="none" stroke="#555" strokeWidth="2" /></svg></ScrollBtn>
            <Thumb />
            <ScrollBtn $end><svg width="8" height="6" viewBox="0 0 8 6"><path d="M.5 1l3.500 3.500l3.500-3.500" fill="none" stroke="#555" strokeWidth="2" /></svg></ScrollBtn>
          </Scroll>
        </TableBody>
      </Table>
    </Group>
  </Setup>
);

export default function App() {
  return (
    <Root>
      <Global />
      <TitleBar>
        <svg width="14" height="16" viewBox="0 0 14 16"><path d="M3 1h9v3h-9z" fill="#555" /><circle cx="5" cy="8" r="4.500" fill="#c9c9d2" /><path d="M3 2h8v2h-8z" fill="#7a6aa8" /><text x="6" y="15" fontFamily="Liberation Sans" fontWeight="bold" fontSize="12" fill="#2b0d86">v</text></svg>
        <Title>Vision Program Manager - [Untitled 76.vp] - (Local Emulator IMPACT Emulator 1)</Title>
        <WinButtons>
          <svg width="12" height="12" viewBox="0 0 12 12"><path d="M1 5.500h10" stroke="#000" /></svg>
          <svg width="12" height="12" viewBox="0 0 12 12"><path d="M1.500 3.500h7v7h-7zM3.500 3v-1.500h7v7h-2" fill="none" stroke="#000" /></svg>
          <svg width="12" height="12" viewBox="0 0 12 12"><path d="M1 1l10 10M11 1l-10 10" stroke="#000" /></svg>
        </WinButtons>
      </TitleBar>
      <MainToolbar />
      <Workspace>
        <LeftSide><RunToolbar /><Panels><Navigation /><Program /></Panels></LeftSide>
        <RightSide>
          <RightOuter>
            <RightFrame>
              <ImageView />
              <SetupPanel />
              <Tabs><Tab $w={42} $on>Setup</Tab><Tab $w={60}>Properties</Tab><Tab $w={78}>Link Summary</Tab><Tab $w={29}>Info</Tab></Tabs>
            </RightFrame>
          </RightOuter>
        </RightSide>
      </Workspace>
    </Root>
  );
}
